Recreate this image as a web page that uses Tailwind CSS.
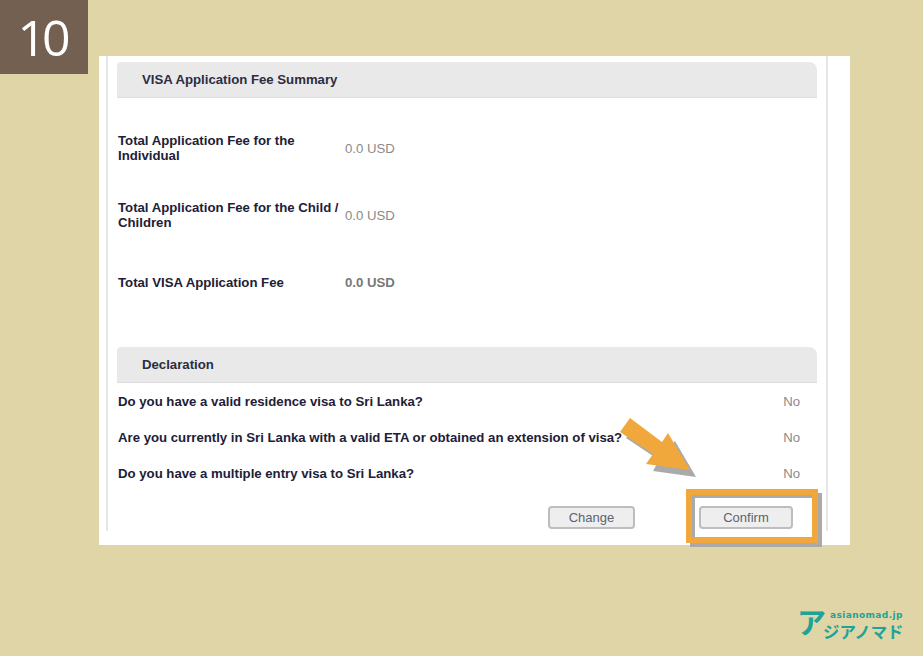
<!DOCTYPE html>
<html lang="en">
  <head>
    <meta charset="UTF-8" />
    <title>VISA Application Fee Summary</title>
    <script src="https://cdn.jsdelivr.net/npm/@tailwindcss/browser@4"></script>
  </head>
  <body class="relative w-[923px] h-[656px] overflow-hidden bg-[#e0d5a7] font-['Liberation_Sans',sans-serif]">
    <!-- step number -->
    <div class="absolute left-0 top-0 w-[88px] h-[74px] bg-[#736050] pr-[4px] flex items-center justify-center text-white text-[50px] font-normal tracking-[-4px] font-['Open_Sans',sans-serif] leading-none">10</div>

    <main class="ml-[99px] pt-[56px] w-[751px]">
      <div class="bg-white h-[489px] pl-[7px] pr-[22px] pb-[14px]">
        <div class="h-full border-x-2 border-[#e6e6e6] pl-[9px] pr-[9px] pt-[6px] flex flex-col">
          <h2 class="h-[36px] shrink-0 bg-[#e9e9e9] border-b border-[#dedede] rounded-tr-lg rounded-tl-sm pl-[25px] flex items-center text-[13.2px] font-bold text-[#2b2d42]">VISA Application Fee Summary</h2>

          <div class="mt-[35px] h-[32px] flex items-center pl-[1px]">
            <div class="w-[227px] pb-[1px] text-[13.2px] leading-[14.5px] font-bold text-[#1e2038]">Total Application Fee for the Individual</div>
            <div class="text-[13.2px] text-[#8a8a8a]">0.0 USD</div>
          </div>
          <div class="mt-[35px] h-[32px] flex items-center pl-[1px]">
            <div class="w-[227px] pb-[1px] text-[13.2px] leading-[14.5px] font-bold text-[#1e2038]">Total Application Fee for the Child / Children</div>
            <div class="text-[13.2px] text-[#8a8a8a]">0.0 USD</div>
          </div>
          <div class="mt-[35px] h-[32px] flex items-center pl-[1px]">
            <div class="w-[227px] pt-[1px] text-[13.2px] leading-[14.5px] font-bold text-[#1e2038]">Total VISA Application Fee</div>
            <div class="text-[13.2px] font-bold text-[#777777]">0.0 USD</div>
          </div>

          <h2 class="mt-[48px] h-[36px] shrink-0 bg-[#e9e9e9] border-b border-[#dedede] rounded-tr-lg rounded-tl-sm pl-[25px] flex items-center text-[13.2px] font-bold text-[#2b2d42]">Declaration</h2>

          <div class="mt-[11px] flex flex-col gap-[20px] pl-[1px]">
            <div class="h-[16px] flex items-center justify-between pr-[17px]">
              <span class="text-[13.2px] font-bold text-[#1e2038]">Do you have a valid residence visa to Sri Lanka?</span>
              <span class="text-[13.2px] text-[#8a8a8a]">No</span>
            </div>
            <div class="h-[16px] flex items-center justify-between pr-[17px]">
              <span class="text-[13.2px] font-bold text-[#1e2038]">Are you currently in Sri Lanka with a valid ETA or obtained an extension of visa?</span>
              <span class="text-[13.2px] text-[#8a8a8a]">No</span>
            </div>
            <div class="h-[16px] flex items-center justify-between pr-[17px]">
              <span class="text-[13.2px] font-bold text-[#1e2038]">Do you have a multiple entry visa to Sri Lanka?</span>
              <span class="text-[13.2px] text-[#8a8a8a]">No</span>
            </div>
          </div>

          <div class="mt-[24px] flex justify-end gap-[64px] pr-[24px]">
            <button class="w-[87px] h-[23px] bg-[#eeeeee] border-2 border-[#bdbdbd] rounded-sm text-[13px] text-[#5b6270]">Change</button>
            <button class="w-[94px] h-[23px] bg-[#eeeeee] border-2 border-[#bdbdbd] rounded-sm text-[13px] text-[#5b6270]">Confirm</button>
          </div>
        </div>
      </div>
    </main>

    <!-- highlight frame and arrow over the form -->
    <div class="absolute left-[686px] top-[489px] w-[132px] h-[54px] border-[6px] border-[#f0a83c] shadow-[4px_4px_0_#aaaaaa,inset_3px_3px_0_#aaaaaa]"></div>
    <svg class="absolute left-[610px] top-[410px]" width="100" height="75" viewBox="0 0 100 75">
      <polygon points="26,14 16,28 49,50 43,61 86,67 65,31 59,38" fill="#aaaaaa" />
      <polygon points="20,8 10,22 43,44 36,54 80,60 58,23 52,32" fill="#f0a83c" />
    </svg>

    <!-- site logo -->
    <div class="absolute left-[798px] top-[610px] w-[110px] h-[30px] text-[#1fa396]">
      <span class="absolute left-[-1px] top-[-3px] text-[29px] leading-none font-bold font-['Noto_Sans_CJK_JP',sans-serif]">ア</span>
      <span class="absolute left-[32px] top-[1px] text-[9px] leading-none font-bold tracking-[0.4px] font-['DejaVu_Sans',sans-serif] whitespace-nowrap">asianomad.jp</span>
      <span class="absolute left-[25px] top-[13px] text-[16.4px] leading-none font-bold font-['Noto_Sans_CJK_JP',sans-serif] whitespace-nowrap">ジアノマド</span>
    </div>
  </body>
</html>
